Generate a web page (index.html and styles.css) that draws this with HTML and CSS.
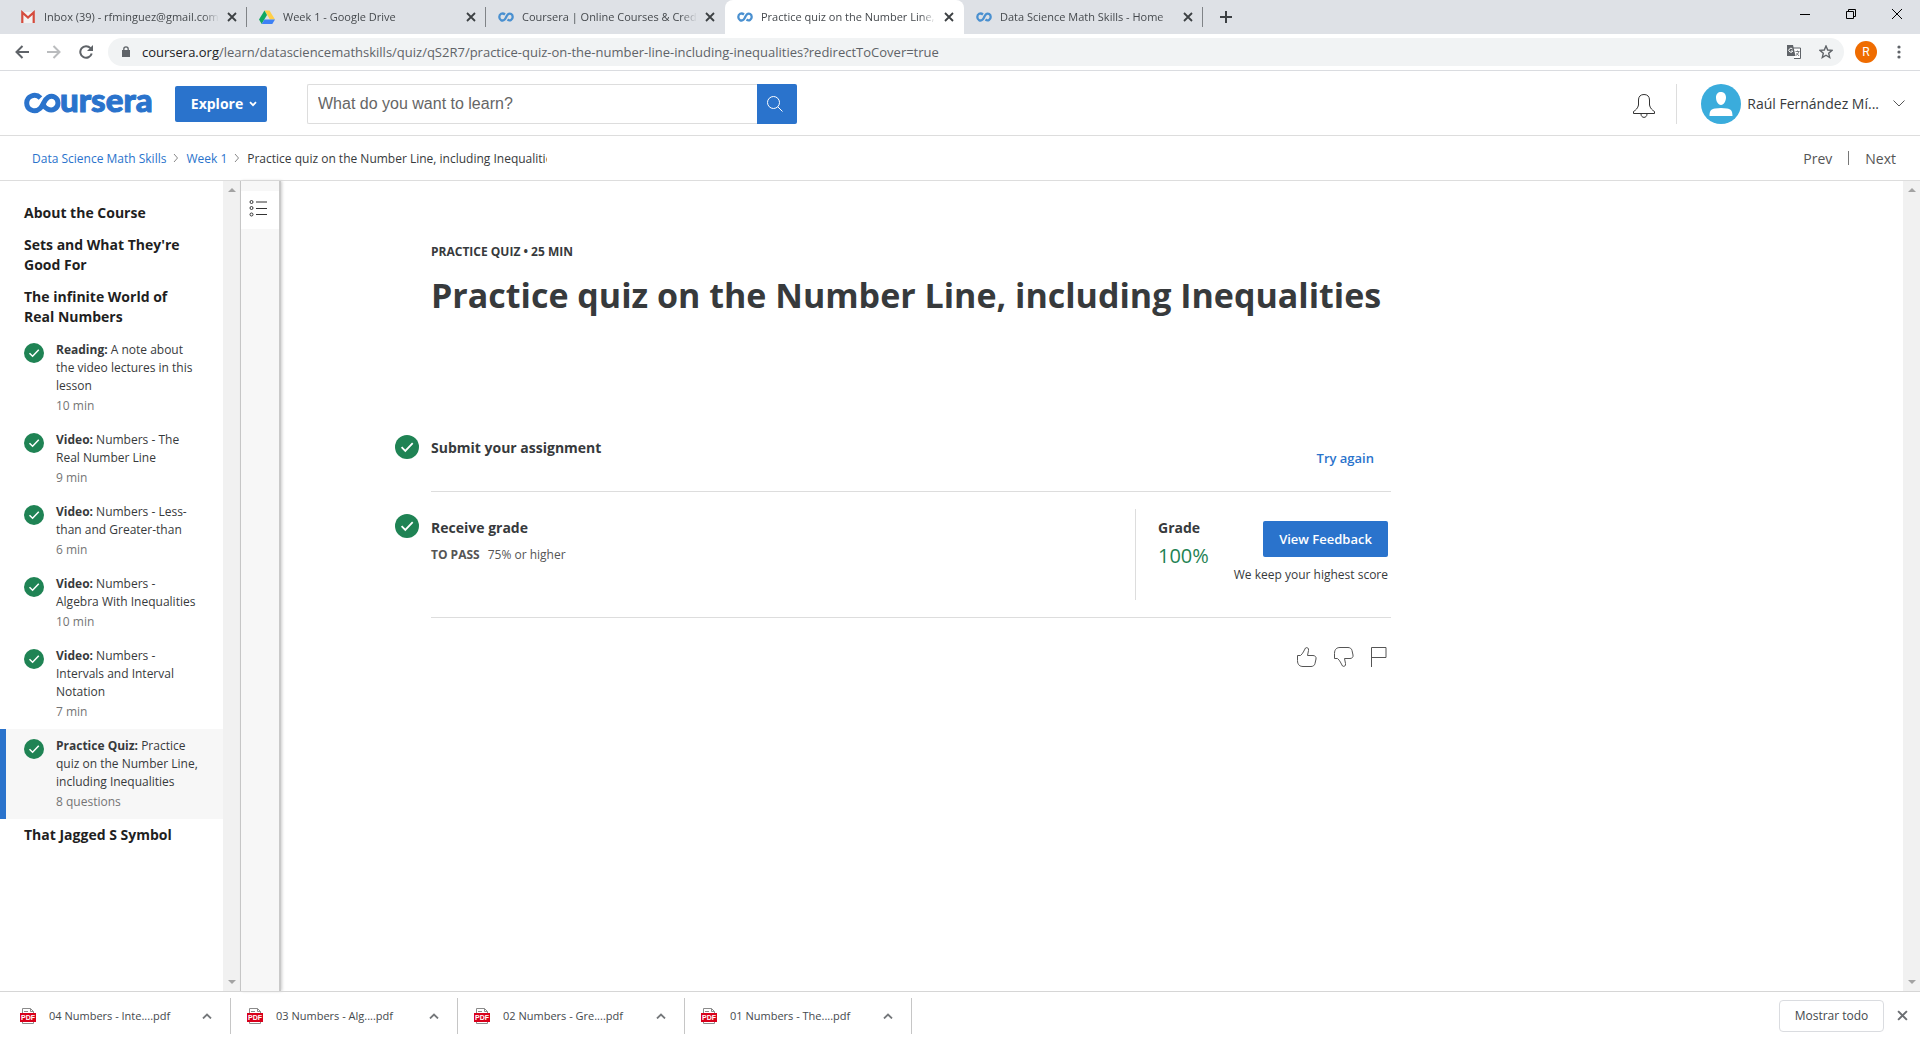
FILE: index.html
```html
<!DOCTYPE html>
<html lang="en">
<head>
<meta charset="utf-8">
<title>Practice quiz on the Number Line, including Inequalities | Coursera</title>
<link rel="stylesheet" href="styles.css">
</head>
<body>
<svg class="defs" aria-hidden="true">
  <symbol id="check" viewBox="0 0 24 24"><circle cx="12" cy="12" r="12" fill="#1f8354"/><path d="M6.6 12.2l3.7 3.7 7.4-7.8" fill="none" stroke="#fff" stroke-width="1.8"/></symbol>
  <symbol id="x" viewBox="0 0 10 10"><path d="M1 1l8 8M9 1l-8 8" fill="none" stroke="currentColor" stroke-width="1.8"/></symbol>
  <symbol id="infinity" viewBox="0 0 16 16"><path d="M7 5.5C4.300 3.200 1.300 5.200 1.300 8s3 4.800 5.400 2.500C8.300 9 8.400 6.700 9.800 5.500c2.400-1.900 4.900 0 4.900 2.500s-2.700 4.400-5.200 2.500" fill="none" stroke="#4a90d0" stroke-width="2.300"/></symbol>
  <symbol id="pdf" viewBox="0 0 16 16"><path d="M2.500 6V.5h8l3 3V6M2.500 13v2.500h11V13M10.500.5v3h3M4 3.500h4" fill="none" stroke="#8b8b8b"/><rect y="5" width="16" height="9" fill="#d9001b"/></symbol>
  <symbol id="up" viewBox="0 0 10 6"><path d="M1 5.500l4-4 4 4" fill="none" stroke="#75787b" stroke-width="1.800"/></symbol>
  <symbol id="crumb" viewBox="0 0 6 10"><path d="M1 1l3.500 4L1 9" fill="none" stroke="#888"/></symbol>
  <symbol id="tri" viewBox="0 0 8 4"><path d="M4 0l4 4H0z" fill="#a3a3a3"/></symbol>
</svg>

<header class="browser">
  <div class="tabs">
    <div class="tab"><svg class="fav" viewBox="0 0 16 16"><path d="M2 3h12v11H2z" fill="#f2f2f2"/><path d="M2.300 14V3.500L8 8.500l5.700-5V14" fill="none" stroke="#d54b3d" stroke-width="2.200"/></svg><span class="tab-title">Inbox (39) - rfminguez@gmail.com</span><button class="tab-close" aria-label="Close tab"><svg><use href="#x"/></svg></button></div>
    <div class="tab"><svg class="fav" viewBox="0 0 16 16"><path d="M5.500 1.500h5L16 10.500h-5z" fill="#ffcf48"/><path d="M5.500 1.500L8 6 2.700 15 0 10.500z" fill="#11a861"/><path d="M5.400 10.500H16L13.300 15H2.700z" fill="#3d80f5"/></svg><span class="tab-title">Week 1 - Google Drive</span><button class="tab-close" aria-label="Close tab"><svg><use href="#x"/></svg></button></div>
    <div class="tab before-active"><svg class="fav"><use href="#infinity"/></svg><span class="tab-title">Coursera | Online Courses &amp; Credentials</span><button class="tab-close" aria-label="Close tab"><svg><use href="#x"/></svg></button></div>
    <div class="tab active"><svg class="fav"><use href="#infinity"/></svg><span class="tab-title">Practice quiz on the Number Line, including</span><button class="tab-close" aria-label="Close tab"><svg><use href="#x"/></svg></button></div>
    <div class="tab"><svg class="fav"><use href="#infinity"/></svg><span class="tab-title">Data Science Math Skills - Home</span><button class="tab-close" aria-label="Close tab"><svg><use href="#x"/></svg></button></div>
    <button class="new-tab" aria-label="New tab"><svg viewBox="0 0 12 12"><path d="M6 0v12M0 6h12" stroke="#3c4043" stroke-width="2"/></svg></button>
    <div class="window-controls">
      <button aria-label="Minimize"><svg viewBox="0 0 10 10"><path d="M0 5.500h10" stroke="#000"/></svg></button>
      <button aria-label="Restore"><svg viewBox="0 0 10 10"><path d="M.5 2.500h7v7h-7zM2.500 2.500v-2h7v7h-2" fill="none" stroke="#000"/></svg></button>
      <button aria-label="Close"><svg viewBox="0 0 10 10"><path d="M0 0l10 10M10 0L0 10" stroke="#000"/></svg></button>
    </div>
  </div>
  <div class="toolbar">
    <button class="nav" aria-label="Back"><svg viewBox="0 0 14 14"><path d="M14 7H1.500M7.500 1L1.500 7l6 6" fill="none" stroke="#5f6368" stroke-width="2"/></svg></button>
    <button class="nav" aria-label="Forward"><svg viewBox="0 0 14 14"><path d="M0 7h12.500M6.500 1l6 6-6 6" fill="none" stroke="#babcbe" stroke-width="2"/></svg></button>
    <button class="nav" aria-label="Reload"><svg viewBox="0 0 14 14"><path d="M11.500 3.200A5.800 5.800 0 1 0 12.700 8.500" fill="none" stroke="#5f6368" stroke-width="2"/><path d="M14 0v6H8z" fill="#5f6368"/></svg></button>
    <div class="omnibox">
      <svg class="lock" viewBox="0 0 8 12"><path d="M0 4h8v7H0z" fill="#5f6368"/><path d="M1.800 4.500V3a2.200 2.200 0 0 1 4.400 0v1.500" fill="none" stroke="#5f6368" stroke-width="1.300"/></svg>
      <span class="url"><b>coursera.org</b>/learn/datasciencemathskills/quiz/qS2R7/practice-quiz-on-the-number-line-including-inequalities?redirectToCover=true</span>
      <svg class="tool" viewBox="0 0 14 14"><path d="M6 3h7.500v10.500H7" fill="#fff" stroke="#5f6368"/><path d="M0 0h6l2.500 11H0z" fill="#5f6368"/><path d="M5.500 4A2 2 0 1 0 5.800 6H4" fill="none" stroke="#fff"/><path d="M8.500 6.500h4M10.500 5.500v1M11.800 6.500c-.5 2-1.500 3-2.800 4M9.500 8l2.500 3" fill="none" stroke="#5f6368" stroke-width=".8"/></svg>
      <svg class="tool" viewBox="0 0 14 14"><path d="M7 1l1.700 4 4.300.4-3.300 2.900 1 4.200L7 10.200l-3.700 2.300 1-4.200L1 5.400 5.300 5z" fill="none" stroke="#5f6368" stroke-width="1.400"/></svg>
    </div>
    <span class="profile">R</span>
    <button class="menu" aria-label="Menu"><svg viewBox="0 0 4 14"><circle cx="2" cy="2" r="1.600"/><circle cx="2" cy="7" r="1.600"/><circle cx="2" cy="12" r="1.600"/></svg></button>
  </div>
</header>

<div class="site-header">
  <a href="#" class="logo" aria-label="coursera"><svg viewBox="0 0 128 24"><path d="M16.500 6C11 .5 2.700 4.500 2.700 11s7.800 10.500 13.300 5.500C20.200 12.700 19.500 8 24 5.300c4.600-2.700 10 .3 10 5.700s-5.500 8.500-10.500 6c-2-1-3.200-2.400-4-4" fill="none" stroke="#2a73cc" stroke-width="5"/><text x="36" y="20" class="logo-text">ursera</text></svg></a>
  <button class="explore">Explore <svg viewBox="0 0 8 6"><path d="M1 1.200l3 3 3-3" fill="none" stroke="#fff" stroke-width="1.800"/></svg></button>
  <form class="search" role="search">
    <input type="text" placeholder="What do you want to learn?" aria-label="What do you want to learn?">
    <button type="button" aria-label="Search"><svg viewBox="0 0 16 16"><circle cx="6.500" cy="6.500" r="6"/><path d="M10.800 10.800l4.700 4.700"/></svg></button>
  </form>
  <button class="bell" aria-label="Notifications"><svg viewBox="0 0 22 24"><path d="M.5 19.500v-2c2-1 4.500-3.500 5-6.500V6c0-3.500 2-5.500 5.500-5.500s5.500 2 5.500 5.500v5c.5 3 3 5.500 5 6.500v2zM8 20c0 4.500 6 4.500 6 0" fill="none" stroke="#333"/></svg></button>
  <button class="account">
    <svg class="avatar" viewBox="0 0 40 40"><circle cx="20" cy="20" r="20" fill="#3aacdc"/><path d="M20 8c3 0 5 2.200 5 5.500S23 21 20 21s-5-4-5-7.500S17 8 20 8zM8.500 32c0-5 1.500-7 5.500-7.500 4-.8 8-.8 12 0 4 .5 5.500 2.500 5.500 7.500z" fill="#fff"/></svg>
    <span class="user">Raúl Fernández Mí...</span>
    <svg class="caret" viewBox="0 0 12 7"><path d="M.5.500L6 6 11.500.5" fill="none" stroke="#555"/></svg>
  </button>
</div>

<div class="subheader">
  <nav class="crumbs" aria-label="Breadcrumb">
    <a href="#">Data Science Math Skills</a><svg><use href="#crumb"/></svg>
    <a href="#">Week 1</a><svg><use href="#crumb"/></svg>
    <span class="here">Practice quiz on the Number Line, including Inequalities</span>
  </nav>
  <div class="pager"><a href="#">Prev</a><i></i><a href="#">Next</a></div>
</div>

<div class="workspace">
  <aside class="sidebar">
    <nav class="lessons">
      <h2>About the Course</h2>
      <h2>Sets and What They're Good For</h2>
      <h2>The infinite World of Real Numbers</h2>
      <a href="#" class="item"><svg><use href="#check"/></svg><span><b>Reading:</b> A note about the video lectures in this lesson<small>10 min</small></span></a>
      <a href="#" class="item"><svg><use href="#check"/></svg><span><b>Video:</b> Numbers - The Real Number Line<small>9 min</small></span></a>
      <a href="#" class="item"><svg><use href="#check"/></svg><span><b>Video:</b> Numbers - Less-than and Greater-than<small>6 min</small></span></a>
      <a href="#" class="item"><svg><use href="#check"/></svg><span><b>Video:</b> Numbers - Algebra With Inequalities<small>10 min</small></span></a>
      <a href="#" class="item"><svg><use href="#check"/></svg><span><b>Video:</b> Numbers - Intervals and Interval Notation<small>7 min</small></span></a>
      <a href="#" class="item current"><svg><use href="#check"/></svg><span><b>Practice Quiz:</b> Practice quiz on the Number Line, including Inequalities<small>8 questions</small></span></a>
      <h2>That Jagged S Symbol</h2>
    </nav>
    <div class="scrollbar"><svg><use href="#tri"/></svg><svg class="down"><use href="#tri"/></svg></div>
  </aside>
  <div class="rail"><button aria-label="Toggle outline"><svg viewBox="0 0 18 18"><g fill="none" stroke="#333"><circle cx="2.500" cy="3" r="1.500"/><circle cx="2.500" cy="9" r="1.500"/><circle cx="2.500" cy="15.500" r="1.500"/><path d="M7 3h11M7 9.500h11M7 15.500h11"/></g></svg></button></div>
  <main class="content">
    <article class="quiz">
      <p class="kind">PRACTICE QUIZ • 25 MIN</p>
      <h1>Practice quiz on the Number Line, including Inequalities</h1>
      <section class="step submit">
        <svg class="done"><use href="#check"/></svg>
        <h3>Submit your assignment</h3>
        <a href="#" class="retry">Try again</a>
      </section>
      <section class="step receive">
        <svg class="done"><use href="#check"/></svg>
        <div class="about"><h3>Receive grade</h3><p><b>TO PASS</b>75% or higher</p></div>
        <div class="result">
          <div class="grade"><h3>Grade</h3><strong>100%</strong></div>
          <div class="feedback"><button>View Feedback</button><p>We keep your highest score</p></div>
        </div>
      </section>
      <div class="reactions">
        <button aria-label="Like"><svg viewBox="0 0 20 20"><path d="M.5 8.500h3c2.500-2 3.500-5 5-7.500 1.500-1 3.500 0 3 2.500L10.500 8.500H16c2 0 3.500 1.500 3 3.500L18 16.500c-.5 2-2 3-4 3H6c-3 0-5.500-1.500-5.500-6z"/></svg></button>
        <button aria-label="Dislike"><svg viewBox="0 0 20 20"><path d="M.5 11.500h3c2.500 2 3.500 5 5 7.500 1.500 1 3.500 0 3-2.500l-1-5H16c2 0 3.500-1.500 3-3.500L18 3.500c-.5-2-2-3-4-3H6C3 .5.500 2 .5 6.500z"/></svg></button>
        <button class="flag" aria-label="Report"><svg viewBox="0 0 16 20"><path d="M.5 20V.5h14.500v10H.500"/></svg></button>
      </div>
    </article>
    <div class="scrollbar"><svg><use href="#tri"/></svg><svg class="down"><use href="#tri"/></svg></div>
  </main>
</div>

<footer class="downloads">
  <div class="file"><svg class="pdf" viewBox="0 0 16 16"><use href="#pdf"/><text x="8" y="12" class="pdf-label">PDF</text></svg><span>04 Numbers - Inte....pdf</span><button aria-label="Options"><svg><use href="#up"/></svg></button></div>
  <div class="file"><svg class="pdf" viewBox="0 0 16 16"><use href="#pdf"/><text x="8" y="12" class="pdf-label">PDF</text></svg><span>03 Numbers - Alg....pdf</span><button aria-label="Options"><svg><use href="#up"/></svg></button></div>
  <div class="file"><svg class="pdf" viewBox="0 0 16 16"><use href="#pdf"/><text x="8" y="12" class="pdf-label">PDF</text></svg><span>02 Numbers - Gre....pdf</span><button aria-label="Options"><svg><use href="#up"/></svg></button></div>
  <div class="file"><svg class="pdf" viewBox="0 0 16 16"><use href="#pdf"/><text x="8" y="12" class="pdf-label">PDF</text></svg><span>01 Numbers - The....pdf</span><button aria-label="Options"><svg><use href="#up"/></svg></button></div>
  <button class="show-all">Mostrar todo</button>
  <button class="dismiss" aria-label="Close"><svg><use href="#x"/></svg></button>
</footer>
</body>
</html>
```
FILE: styles.css
```css
* { box-sizing: border-box; }
body {
  margin: 0;
  height: 100vh;
  display: flex;
  flex-direction: column;
  font-family: "Open Sans", "Noto Sans", sans-serif;
  font-size: 12px;
  color: #373a3c;
  background: #fff;
}
button {
  padding: 0;
  border: 0;
  background: none;
  font: inherit;
  color: inherit;
  display: flex;
  align-items: center;
  justify-content: center;
}
a { color: #2a73cc; text-decoration: none; }
h1, h2, h3, p { margin: 0; }
svg { display: block; flex: none; }
.defs { position: absolute; width: 0; height: 0; }

/* Browser chrome */
.browser { flex: none; border-bottom: 1px solid #dadce0; }
.tabs { display: flex; height: 34px; padding-left: 8px; background: #dee1e6; }
.tab {
  position: relative;
  display: flex;
  align-items: center;
  width: 239px;
  padding: 0 10px 0 12px;
  color: #45494d;
}
.tab::after {
  content: "";
  position: absolute;
  right: 0;
  top: 7px;
  width: 1px;
  height: 20px;
  background: #808387;
}
.tab.active { background: #fff; border-radius: 8px 8px 0 0; }
.tab.active::after, .tab.before-active::after { display: none; }
.fav { width: 16px; height: 16px; margin-right: 8px; }
.tab-title {
  flex: 1;
  overflow: hidden;
  white-space: nowrap;
  font-size: 11px;
  line-height: 16px;
  padding-bottom: 1px;
  -webkit-mask-image: linear-gradient(to left, transparent, #000 16px);
  mask-image: linear-gradient(to left, transparent, #000 16px);
}
.tab-close { width: 10px; margin-left: 8px; color: #3c4043; }
.tab-close svg { width: 10px; height: 10px; }
.new-tab { width: 46px; }
.new-tab svg { width: 12px; height: 12px; }
.window-controls { display: flex; margin-left: auto; height: 28px; }
.window-controls button { width: 46px; }
.window-controls svg { width: 10px; height: 10px; }

.toolbar { display: flex; align-items: center; height: 36px; padding: 0 10px 0 6px; }
.nav { width: 32px; height: 28px; }
.nav svg { width: 14px; height: 14px; }
.omnibox {
  flex: 1;
  display: flex;
  align-items: center;
  gap: 18px;
  height: 28px;
  margin-left: 6px;
  padding: 0 11px 0 14px;
  border-radius: 14px;
  background: #f1f3f4;
}
.lock { width: 8px; height: 12px; margin-right: -6px; }
.url { flex: 1; overflow: hidden; white-space: nowrap; font-size: 13px; color: #5f6368; }
.url b { font-weight: 400; color: #202124; }
.tool { width: 14px; height: 14px; }
.profile {
  width: 22px;
  margin-left: 11px;
  border-radius: 50%;
  background: #ef6c00;
  color: #fff;
  line-height: 22px;
  text-align: center;
  font-family: Roboto, sans-serif;
}
.menu { width: 22px; margin-left: 11px; }
.menu svg { width: 4px; height: 14px; fill: #5f6368; }

/* Site header */
.site-header {
  flex: none;
  display: flex;
  align-items: center;
  height: 65px;
  padding: 1px 15px 0 24px;
  border-bottom: 1px solid #ddd;
}
.logo svg { width: 128px; height: 24px; }
.logo-text { font: 900 33px Lato, sans-serif; fill: #2a73cc; stroke: #2a73cc; stroke-width: 1; }
.explore {
  width: 92px;
  height: 36px;
  gap: 6px;
  padding-left: 6px;
  margin: 0 40px 0 23px;
  border-radius: 2px;
  background: #2a73cc;
  color: #fff;
  font-size: 14px;
  font-weight: 700;
}
.explore svg { width: 8px; height: 6px; }
.search { display: flex; width: 490px; height: 40px; }
.search input {
  flex: 1;
  min-width: 0;
  padding: 0 10px;
  border: 1px solid #ddd;
  border-right: 0;
  border-radius: 2px 0 0 2px;
  font: 16px "Liberation Sans", Arial, sans-serif;
}
.search input::placeholder { color: #666; }
.search button { width: 40px; padding-right: 4px; background: #2a73cc; border-radius: 0 2px 2px 0; }
.search svg { width: 16px; height: 16px; fill: none; stroke: #fff; }
.bell { margin-left: auto; width: 22px; }
.bell svg { width: 22px; height: 24px; margin-top: 4px; }
.account {
  height: 40px;
  margin-left: 21px;
  padding-left: 24px;
  border-left: 1px solid #ddd;
  font-size: 14px;
}
.avatar { width: 40px; height: 40px; margin-right: 6px; }
.caret { width: 12px; height: 7px; margin-left: 14px; }

.subheader {
  flex: none;
  display: flex;
  align-items: center;
  justify-content: space-between;
  height: 45px;
  padding: 0 24px 0 32px;
  border-bottom: 1px solid #ddd;
}
.crumbs { display: flex; align-items: center; gap: 7px; white-space: nowrap; }
.crumbs svg { width: 6px; height: 10px; }
.here { width: 300px; overflow: hidden; }
.pager { display: flex; align-items: center; gap: 16px; font-size: 14px; }
.pager a { color: #555; }
.pager i { width: 1px; height: 14px; background: #777; }

/* Course outline */
.workspace { flex: 1; min-height: 0; display: flex; }
.sidebar { flex: none; display: flex; width: 241px; border-right: 1px solid #c4c4c4; }
.lessons { flex: 1; padding-top: 16px; }
.lessons h2 { padding: 6px 32px 6px 24px; font-size: 14px; line-height: 20px; font-weight: 700; color: #1f1f1f; }
.item {
  display: flex;
  gap: 12px;
  padding: 8px 24px 8px 18px;
  border-left: 6px solid transparent;
  line-height: 18px;
  color: #373a3c;
}
.item svg { width: 20px; height: 20px; margin-top: 2px; }
.item small { display: block; margin-top: 2px; font-size: 12px; color: #757575; }
.item.current { background: #f7f7f7; border-color: #2a73cc; }
.scrollbar {
  flex: none;
  display: flex;
  flex-direction: column;
  align-items: center;
  justify-content: space-between;
  width: 17px;
  padding: 7px 0;
  background: #f1f1f1;
}
.scrollbar svg { width: 8px; height: 4px; }
.scrollbar .down { transform: rotate(180deg); }
.rail {
  flex: none;
  width: 40px;
  padding-top: 10px;
  background: #f7f7f7;
  border-right: 2px solid #c9c9c9;
  box-shadow: 1px 0 3px #ccc;
}
.rail button { width: 100%; height: 38px; padding: 0 4px 4px 0; background: #fff; }
.rail svg { width: 18px; height: 18px; }

/* Quiz cover */
.content { flex: 1; min-width: 0; display: flex; justify-content: space-between; }
.quiz { width: 1110px; padding: 62px 0 0 150px; }
.kind { line-height: 18px; font-weight: 700; }
h1 { margin-top: 12px; font-size: 34px; line-height: 44px; font-weight: 700; white-space: nowrap; }
h3 { font-size: 14px; line-height: 20px; font-weight: 700; }
.step { position: relative; border-bottom: 1px solid #ddd; }
.done { position: absolute; left: -36px; width: 24px; height: 24px; }
.submit { display: flex; justify-content: space-between; height: 66px; margin-top: 109px; padding: 12px 17px 0 0; }
.submit .done { top: 9px; }
.retry { padding-top: 11px; font-size: 13px; line-height: 18px; font-weight: 600; }
.receive { display: flex; justify-content: space-between; padding: 17px 0; height: 126px; }
.receive .done { top: 22px; }
.about { padding-top: 9px; }
.about p { margin-top: 8px; line-height: 18px; color: #555; }
.about b { margin-right: 8px; font-weight: 700; }
.result { display: flex; justify-content: space-between; width: 256px; padding: 9px 3px 0 22px; border-left: 1px solid #ddd; }
.grade strong { display: block; margin-top: 4px; font-size: 20px; line-height: 28px; font-weight: 400; color: #1f8354; }
.feedback { display: flex; flex-direction: column; align-items: flex-end; padding-top: 3px; }
.feedback button { width: 125px; height: 36px; border-radius: 2px; background: #2a73cc; color: #fff; font-size: 13px; font-weight: 600; }
.feedback p { margin-top: 9px; line-height: 18px; }
.reactions { display: flex; justify-content: flex-end; gap: 17px; padding: 29px 4px 0 0; }
.reactions svg { width: 20px; height: 20px; fill: none; stroke: #555; }
.reactions .flag svg { width: 16px; }

/* Download shelf */
.downloads { flex: none; display: flex; align-items: center; height: 49px; padding-bottom: 1px; border-top: 1px solid #d6d6d6; color: #45494d; }
.file { display: flex; align-items: center; width: 227px; height: 36px; padding: 0 18px 0 16px; border-right: 1px solid #c6c6c6; font-size: 11px; }
.file:first-child { width: 231px; padding-left: 20px; }
.pdf { width: 16px; height: 16px; margin-right: 13px; }
.pdf-label { font: 700 7px "Liberation Sans", sans-serif; fill: #fff; text-anchor: middle; }
.file button { margin-left: auto; }
.file button svg { width: 10px; height: 6px; }
.show-all { width: 105px; height: 32px; margin-left: auto; border: 1px solid #dadce0; border-radius: 4px; }
.dismiss { width: 12px; margin: 0 12px; color: #6b6e72; }
.dismiss svg { width: 11px; height: 11px; }
```
